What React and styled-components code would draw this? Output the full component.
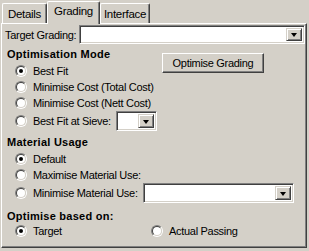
import React from 'react'
import styled, { createGlobalStyle } from 'styled-components'

const GlobalStyle = createGlobalStyle`
    html, body {
        margin: 0;
        padding: 0;
        background: #d4d0c8;
    }
    body {
        font-family: "Liberation Sans", Arial, sans-serif;
        font-size: 11px;
        color: #000;
    }
`

function Radio({ checked, children }) {
    return (
        <Option>
            <RadioOuter>
                <RadioInner>{checked && <RadioDot />}</RadioInner>
            </RadioOuter>
            <span>{children}</span>
        </Option>
    )
}

function Combo({ width, height }) {
    return (
        <ComboBox $width={width} $height={height}>
            <ComboField />
            <ComboButton>
                <Arrow />
            </ComboButton>
        </ComboBox>
    )
}

function App() {
    return (
        <Window>
            <GlobalStyle />
            <TabStrip>
                <Tab $w={45}>Details</Tab>
                <Tab $w={53} $active>Grading</Tab>
                <Tab $w={50}>Interface</Tab>
            </TabStrip>
            <Panel>
                <FieldRow>
                    <Label>Target Grading:</Label>
                    <Combo height={19} />
                </FieldRow>

                <ModeGrid>
                    <div>
                        <Heading>Optimisation Mode</Heading>
                        <OptionList>
                            <Radio checked>Best Fit</Radio>
                            <Radio>Minimise Cost (Total Cost)</Radio>
                            <Radio>Minimise Cost (Nett Cost)</Radio>
                            <ComboRow>
                                <Radio>Best Fit at Sieve:</Radio>
                                <Combo width={41} height={20} />
                            </ComboRow>
                        </OptionList>
                    </div>
                    <Button>Optimise Grading</Button>
                </ModeGrid>

                <Heading $top={4}>Material Usage</Heading>
                <OptionList>
                    <Radio checked>Default</Radio>
                    <Radio>Maximise Material Use:</Radio>
                    <ComboRow>
                        <Radio>Minimise Material Use:</Radio>
                        <Combo width={151} height={20} />
                    </ComboRow>
                </OptionList>

                <Heading $top={6}>Optimise based on:</Heading>
                <InlineOptions>
                    <OptionSlot $w={136}>
                        <Radio checked>Target</Radio>
                    </OptionSlot>
                    <Radio>Actual Passing</Radio>
                </InlineOptions>
            </Panel>
        </Window>
    )
}

export default App

const Window = styled.div`
    width: 309px;
    height: 251px;
    padding-left: 1px;
    box-sizing: border-box;
    letter-spacing: -0.3px;
`
const TabStrip = styled.div`
    display: flex;
    align-items: flex-end;
    height: 23px;
    padding-left: 1px;
    position: relative;
    z-index: 1;
`
const Tab = styled.div`
    width: ${p => p.$w}px;
    height: ${p => (p.$active ? 23 : 20)}px;
    margin-bottom: ${p => (p.$active ? -1 : 0)}px;
    box-sizing: border-box;
    background: #d4d0c8;
    border-top: 1px solid #fff;
    border-left: 1px solid #fff;
    border-right: 1px solid #404040;
    border-radius: 2px 2px 0 0;
    box-shadow: inset -1px 0 #808080;
    display: flex;
    justify-content: center;
    padding-top: ${p => (p.$active ? 3 : 4)}px;
    line-height: 13px;
    font-size: 11.5px;
`
const Panel = styled.div`
    width: 306px;
    height: 225px;
    box-sizing: border-box;
    border-top: 1px solid #fff;
    border-left: 1px solid #fff;
    border-right: 1px solid #404040;
    border-bottom: 1px solid #404040;
    box-shadow: inset -1px -1px #808080;
    padding: 1px 1px 0 3px;
`
const FieldRow = styled.div`
    display: flex;
    align-items: center;
    height: 19px;
`
const Label = styled.span`
    width: 74px;
    flex: none;
`
const ComboBox = styled.div`
    ${p => (p.$width ? `width: ${p.$width}px; flex: none;` : 'flex: 1;')}
    height: ${p => p.$height}px;
    box-sizing: border-box;
    display: flex;
    border-top: 1px solid #808080;
    border-left: 1px solid #808080;
    border-right: 1px solid #fff;
    border-bottom: 1px solid #fff;
    box-shadow: inset 1px 1px #404040, inset -1px -1px #d4d0c8;
    padding: 2px;
    background: #fff;
`
const ComboField = styled.div`
    flex: 1;
    background: #fff;
`
const ComboButton = styled.div`
    width: 16px;
    flex: none;
    box-sizing: border-box;
    background: #d4d0c8;
    border-top: 1px solid #d4d0c8;
    border-left: 1px solid #d4d0c8;
    border-right: 1px solid #404040;
    border-bottom: 1px solid #404040;
    box-shadow: inset 1px 1px #fff, inset -1px -1px #808080;
    display: flex;
    align-items: center;
    justify-content: center;
`
const Arrow = styled.div`
    width: 0;
    height: 0;
    border-left: 3.5px solid transparent;
    border-right: 3.5px solid transparent;
    border-top: 4px solid #000;
    margin-top: 1px;
`
const ModeGrid = styled.div`
    display: grid;
    grid-template-columns: 157px 102px;
    align-items: start;
    margin-top: 3px;
`
const Heading = styled.div`
    font-weight: bold;
    line-height: 14px;
    padding-left: 2px;
    letter-spacing: 0.25px;
    margin-top: ${p => p.$top || 0}px;
`
const Button = styled.div`
    height: 20px;
    margin-top: 6px;
    box-sizing: border-box;
    border-top: 1px solid #fff;
    border-left: 1px solid #fff;
    border-right: 1px solid #404040;
    border-bottom: 1px solid #404040;
    box-shadow: inset -1px -1px #808080;
    display: flex;
    align-items: center;
    justify-content: center;
`
const OptionList = styled.div`
    display: flex;
    flex-direction: column;
    margin-top: 2px;
`
const Option = styled.div`
    display: flex;
    align-items: center;
    height: 16px;
    gap: 6px;
    padding-left: 10px;
    white-space: nowrap;
`
const ComboRow = styled.div`
    display: flex;
    align-items: center;
    height: 20px;
    gap: 5px;
`
const InlineOptions = styled.div`
    display: flex;
    align-items: center;
`
const OptionSlot = styled.div`
    width: ${p => p.$w}px;
`
const RadioOuter = styled.span`
    width: 12px;
    height: 12px;
    box-sizing: border-box;
    border-radius: 50%;
    border: 1px solid;
    border-color: #808080 #fff #fff #808080;
    display: flex;
    flex: none;
`
const RadioInner = styled.span`
    flex: 1;
    border-radius: 50%;
    border: 1px solid;
    border-color: #404040 #d4d0c8 #d4d0c8 #404040;
    background: #fff;
    display: flex;
    align-items: center;
    justify-content: center;
`
const RadioDot = styled.span`
    width: 4px;
    height: 4px;
    border-radius: 50%;
    background: #000;
`
